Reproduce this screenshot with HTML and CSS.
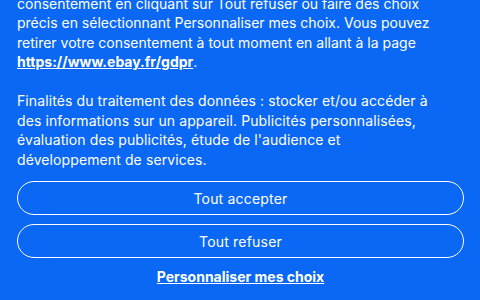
FILE: index.html
```html
<!DOCTYPE html>
<html lang="fr">
<head>
<meta charset="utf-8">
<link rel="stylesheet" href="styles.css">
</head>
<body>
<div class="banner">
  <div class="content">
    <p class="text consent">En cliquant sur Tout accepter, vous consentez à ce que nous utilisions des cookies. Vous pouvez refuser votre consentement en cliquant sur Tout refuser ou faire des choix précis en sélectionnant Personnaliser mes choix. Vous pouvez retirer votre consentement à tout moment en allant à la page <a class="inline-link" href="#">https://www.ebay.fr/gdpr</a>.</p>
    <p class="text purposes">Finalités du traitement des données : stocker et/ou accéder à des informations sur un appareil. Publicités personnalisées, évaluation des publicités, étude de l'audience et développement de services.</p>
    <div class="actions">
      <button class="btn">Tout accepter</button>
      <button class="btn">Tout refuser</button>
      <a class="customize" href="#">Personnaliser mes choix</a>
    </div>
  </div>
</div>
</body>
</html>
```

FILE: styles.css
```css
html, body {
  margin: 0;
  padding: 0;
  height: 300px;
  overflow: hidden;
}
body {
  background: #0a68f5;
  color: #fff;
  font-family: Inter, "Open Sans", Arial, sans-serif;
}
.banner {
  height: 300px;
  display: flex;
  flex-direction: column;
  justify-content: flex-end;
  overflow: hidden;
}
.content {
  padding: 0 16px 13px 17px;
}
.text {
  margin: 0 0 19.5px;
  max-width: 420px;
  font-size: 14px;
  line-height: 19.5px;
}
.consent {
  letter-spacing: 0;
}
.purposes {
  letter-spacing: 0.1px;
  margin-bottom: 12px;
}
.inline-link {
  color: #fff;
  font-weight: 700;
  letter-spacing: 0;
  text-decoration: underline;
}
.actions {
  display: flex;
  flex-direction: column;
  gap: 9px;
  align-items: stretch;
}
.btn {
  height: 34px;
  border: 1px solid #fff;
  border-radius: 17px;
  background: transparent;
  color: #fff;
  font-family: inherit;
  font-size: 14px;
  letter-spacing: 0.2px;
  cursor: pointer;
}
.customize {
  align-self: center;
  color: #fff;
  font-weight: 700;
  font-size: 14px;
  line-height: 20px;
  text-decoration: underline;
}
```
